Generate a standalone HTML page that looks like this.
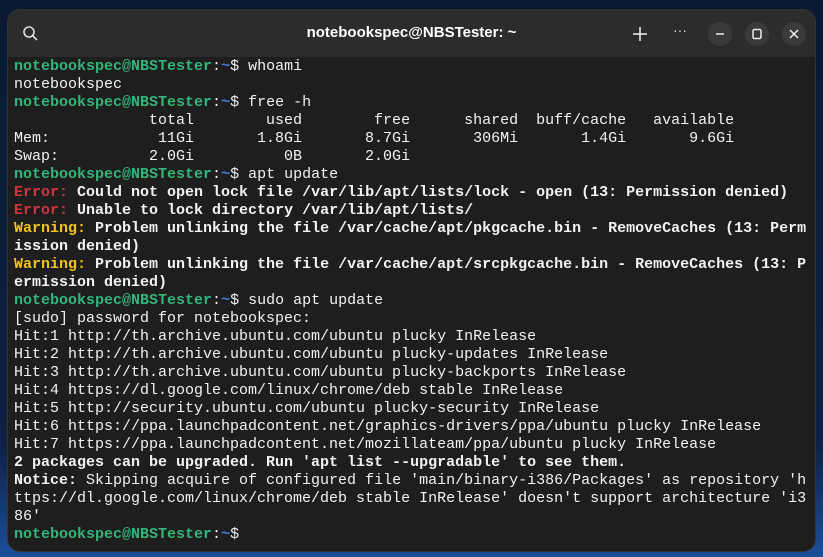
<!DOCTYPE html>
<html><head><meta charset="utf-8"><style>
html,body{margin:0;padding:0;width:823px;height:557px;overflow:hidden;background:linear-gradient(180deg,#0a1a33 0%,#0d2144 80%,#1d4f9a 100%);}
.win{position:absolute;left:8px;top:10px;width:807px;height:541px;background:#1e1e1e;border-radius:12px;overflow:hidden;box-shadow:0 0 0 1px #333;}
.tb{height:47px;background:#2c2c2c;position:relative;color:#fff;font-family:"Liberation Sans",sans-serif;}
.title{position:absolute;left:0;right:0;top:14px;text-align:center;font-size:15px;font-weight:bold;}
.btn{position:absolute;top:12px;width:24px;height:24px;border-radius:12px;background:#3a3a3a;}
pre{margin:0;position:absolute;left:6px;top:48px;font-family:"Liberation Mono",monospace;font-size:15px;line-height:18px;color:#f2f2f2;white-space:pre;}
.g{color:#33b579;font-weight:bold}.b{color:#3d7fe0;font-weight:bold}.r{color:#d0343f;font-weight:bold}.y{color:#f2c31c;font-weight:bold}.w{font-weight:bold}
</style></head><body>
<div class="win">
<div class="tb">
<svg style="position:absolute;left:14px;top:15px" width="18" height="18" viewBox="0 0 18 18"><circle cx="7" cy="7" r="5" fill="none" stroke="#ddd" stroke-width="1.6"/><line x1="10.5" y1="10.5" x2="15" y2="15" stroke="#ddd" stroke-width="1.6"/></svg>
<div class="title">notebookspec@NBSTester: ~</div>
<svg style="position:absolute;left:624px;top:16px" width="16" height="16"><path d="M8 1V15M1 8H15" stroke="#eee" stroke-width="1.5"/></svg>
<div style="position:absolute;left:665px;top:12px;color:#ddd;font-size:14px">···</div>
<div class="btn" style="left:700px"><svg width="24" height="24"><path d="M8 12H16" stroke="#eee" stroke-width="1.5"/></svg></div>
<div class="btn" style="left:737px"><svg width="24" height="24"><rect x="8" y="7.5" width="8" height="9" rx="1.5" fill="none" stroke="#eee" stroke-width="1.5"/></svg></div>
<div class="btn" style="left:774px"><svg width="24" height="24"><path d="M8 8L16 16M16 8L8 16" stroke="#eee" stroke-width="1.5"/></svg></div>
</div>
<pre><span class="g">notebookspec@NBSTester</span>:<span class="b">~</span>$ whoami
notebookspec
<span class="g">notebookspec@NBSTester</span>:<span class="b">~</span>$ free -h
               total        used        free      shared  buff/cache   available
Mem:            11Gi       1.8Gi       8.7Gi       306Mi       1.4Gi       9.6Gi
Swap:          2.0Gi          0B       2.0Gi
<span class="g">notebookspec@NBSTester</span>:<span class="b">~</span>$ apt update
<span class="r">Error:</span> <span class="w">Could not open lock file /var/lib/apt/lists/lock - open (13: Permission denied)</span>
<span class="r">Error:</span> <span class="w">Unable to lock directory /var/lib/apt/lists/</span>
<span class="y">Warning:</span> <span class="w">Problem unlinking the file /var/cache/apt/pkgcache.bin - RemoveCaches (13: Perm
ission denied)</span>
<span class="y">Warning:</span> <span class="w">Problem unlinking the file /var/cache/apt/srcpkgcache.bin - RemoveCaches (13: P
ermission denied)</span>
<span class="g">notebookspec@NBSTester</span>:<span class="b">~</span>$ sudo apt update
[sudo] password for notebookspec:
Hit:1 http://th.archive.ubuntu.com/ubuntu plucky InRelease
Hit:2 http://th.archive.ubuntu.com/ubuntu plucky-updates InRelease
Hit:3 http://th.archive.ubuntu.com/ubuntu plucky-backports InRelease
Hit:4 https://dl.google.com/linux/chrome/deb stable InRelease
Hit:5 http://security.ubuntu.com/ubuntu plucky-security InRelease
Hit:6 https://ppa.launchpadcontent.net/graphics-drivers/ppa/ubuntu plucky InRelease
Hit:7 https://ppa.launchpadcontent.net/mozillateam/ppa/ubuntu plucky InRelease
<span class="w">2 packages can be upgraded. Run 'apt list --upgradable' to see them.</span>
<span class="w">Notice:</span> Skipping acquire of configured file 'main/binary-i386/Packages' as repository 'h
ttps://dl.google.com/linux/chrome/deb stable InRelease' doesn't support architecture 'i3
86'
<span class="g">notebookspec@NBSTester</span>:<span class="b">~</span>$</pre>
</div>
</body></html>
